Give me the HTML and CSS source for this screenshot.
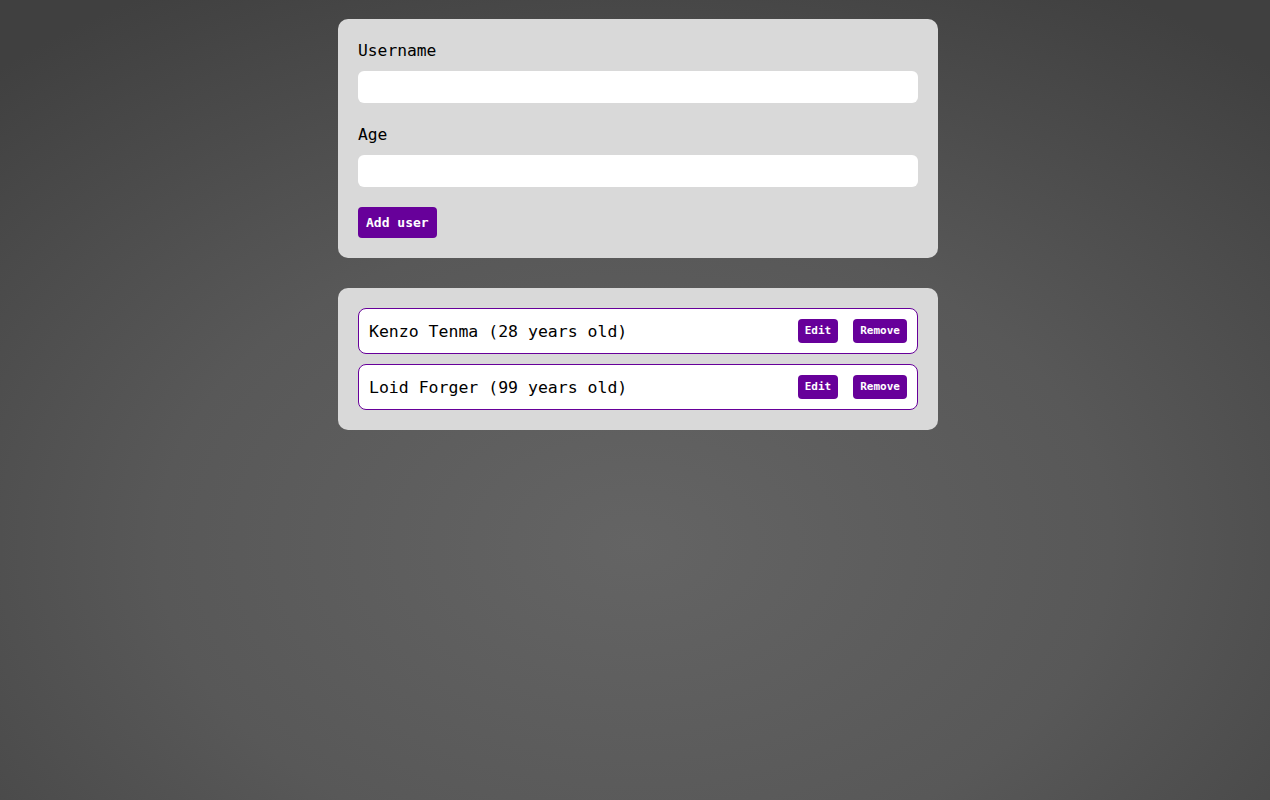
FILE: index.html
```html
<!DOCTYPE html>
<html lang="en">
<head>
<meta charset="utf-8">
<title>Users</title>
<link rel="stylesheet" href="styles.css">
</head>
<body>
<main class="app">
  <section class="card">
    <form class="user-form">
      <div class="control">
        <label for="username">Username</label>
        <input id="username" type="text">
      </div>
      <div class="control">
        <label for="age">Age</label>
        <input id="age" type="number">
      </div>
      <button type="button" class="btn">Add user</button>
    </form>
  </section>
  <section class="card">
    <ul class="users">
      <li class="user">
        <span class="user-name">Kenzo Tenma (28 years old)</span>
        <div class="actions">
          <button type="button" class="btn btn-sm">Edit</button>
          <button type="button" class="btn btn-sm">Remove</button>
        </div>
      </li>
      <li class="user">
        <span class="user-name">Loid Forger (99 years old)</span>
        <div class="actions">
          <button type="button" class="btn btn-sm">Edit</button>
          <button type="button" class="btn btn-sm">Remove</button>
        </div>
      </li>
    </ul>
  </section>
</main>
</body>
</html>
```
FILE: styles.css
```css
* { box-sizing: border-box; }
html, body { height: 100%; }
body {
  margin: 0;
  font-family: "DejaVu Sans Mono", "Liberation Mono", monospace;
  color: #000;
  background: radial-gradient(ellipse 75% 80% at 50% 68%, #646464 0%, #585858 50%, #404040 100%);
  background-color: #404040;
}
.app {
  display: flex;
  flex-direction: column;
  align-items: center;
  gap: 30px;
  padding-top: 19px;
  padding-left: 6px;
}
.card {
  width: 600px;
  background: #d9d9d9;
  border-radius: 10px;
  padding: 20px;
}
.control { margin-bottom: 20px; }
.control label {
  display: block;
  font-size: 16.3px;
  line-height: 24px;
  margin-bottom: 8px;
}
.control input {
  display: block;
  width: 100%;
  height: 32px;
  border: none;
  border-radius: 6px;
  background: #fff;
  font: inherit;
  padding: 0 8px;
}
.btn {
  font-family: "DejaVu Sans Mono", "Liberation Mono", monospace;
  font-weight: bold;
  font-size: 13px;
  line-height: 15px;
  padding: 8px 8px;
  color: #fff;
  background: #67009a;
  border: none;
  border-radius: 4px;
  cursor: pointer;
}
.users {
  list-style: none;
  margin: 0;
  padding: 0;
  display: flex;
  flex-direction: column;
  gap: 10px;
}
.user {
  display: flex;
  align-items: center;
  justify-content: space-between;
  height: 46px;
  padding: 0 10px;
  background: #fff;
  border: 1px solid #67009a;
  border-radius: 8px;
}
.user-name {
  font-size: 16.5px;
  line-height: 24px;
  padding-top: 2px;
}
.actions {
  display: flex;
  gap: 15px;
}
.btn-sm {
  font-size: 11px;
  line-height: 14px;
  padding: 5px 7px;
}
```
